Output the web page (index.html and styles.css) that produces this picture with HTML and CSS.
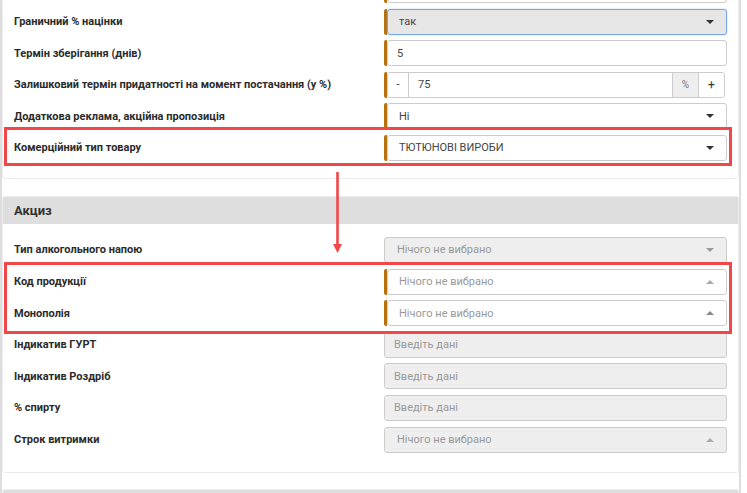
FILE: index.html
```html
<!DOCTYPE html>
<html lang="uk">
<head>
<meta charset="utf-8">
<title>Форма товару</title>
<link rel="stylesheet" href="styles.css">
</head>
<body>
<div class="page">
  <div class="frame">
    <section class="panel panel-main">
      <div class="form">
        <div class="lbl"></div>
        <div class="ctl req"><div class="box inp"></div></div>

        <div class="lbl">Граничний % націнки</div>
        <div class="ctl req"><div class="box sel focus"><span>так</span><i class="caret"></i></div></div>

        <div class="lbl">Термін зберігання (днів)</div>
        <div class="ctl req"><div class="box inp">5</div></div>

        <div class="lbl">Залишковий термін придатності на момент постачання (у %)</div>
        <div class="ctl req">
          <div class="group">
            <span class="gbtn minus">-</span>
            <span class="gval">75</span>
            <span class="addon">%</span>
            <span class="gbtn plus">+</span>
          </div>
        </div>

        <div class="lbl">Додаткова реклама, акційна пропозиція</div>
        <div class="ctl req"><div class="box sel"><span>Ні</span><i class="caret"></i></div></div>

        <div class="lbl">Комерційний тип товару</div>
        <div class="ctl req"><div class="box sel"><span>ТЮТЮНОВІ ВИРОБИ</span><i class="caret"></i></div></div>
      </div>
    </section>

    <section class="panel">
      <h2 class="heading">Акциз</h2>
      <div class="form form-excise">
        <div class="lbl">Тип алкогольного напою</div>
        <div class="ctl"><div class="box sel disabled"><span>Нічого не вибрано</span><i class="caret muted"></i></div></div>

        <div class="lbl">Код продукції</div>
        <div class="ctl req"><div class="box sel placeholder"><span>Нічого не вибрано</span><i class="caret up"></i></div></div>

        <div class="lbl">Монополія</div>
        <div class="ctl req"><div class="box sel placeholder"><span>Нічого не вибрано</span><i class="caret up dark"></i></div></div>

        <div class="lbl">Індикатив ГУРТ</div>
        <div class="ctl"><div class="box inp disabled">Введіть дані</div></div>

        <div class="lbl">Індикатив Роздріб</div>
        <div class="ctl"><div class="box inp disabled">Введіть дані</div></div>

        <div class="lbl">% спирту</div>
        <div class="ctl"><div class="box inp disabled">Введіть дані</div></div>

        <div class="lbl">Строк витримки</div>
        <div class="ctl"><div class="box sel disabled"><span>Нічого не вибрано</span><i class="caret up"></i></div></div>
      </div>
    </section>

    <section class="panel">
      <h2 class="heading">&nbsp;</h2>
    </section>
  </div>

  <div class="mark mark-commercial"></div>
  <svg class="arrow" width="9" height="81" viewBox="0 0 9 81" aria-hidden="true">
    <line x1="4.5" y1="0" x2="4.5" y2="73" stroke="#f24749" stroke-width="2.6"/>
    <polygon points="0,72 9,72 4.5,81" fill="#f24749"/>
  </svg>
  <div class="mark mark-excise"></div>
</div>
</body>
</html>
```
FILE: styles.css
```css
* { box-sizing: border-box; }

html, body {
  margin: 0;
  padding: 0;
  background: #fff;
}

body {
  font-family: Roboto, "Liberation Sans", Arial, sans-serif;
  color: #333;
  overflow: hidden;
}

.page {
  position: relative;
  width: 747px;
  height: 493px;
  overflow: hidden;
}

.frame {
  width: 741px;
  margin-top: -37px;
  border-left: 2px solid #dedede;
  border-right: 2px solid #dedede;
}

.panel {
  border: 1px solid #ececec;
  border-radius: 3px;
  margin-bottom: 16px;
  background: #fff;
}

.panel-main {
  margin-bottom: 17px;
}

.heading {
  margin: 0;
  height: 27px;
  display: flex;
  align-items: center;
  padding-left: 11px;
  background: #dedede;
  font-size: 13px;
  font-weight: 700;
  color: #333;
}

.form {
  display: grid;
  grid-template-columns: 370px 343px;
  row-gap: 5.6px;
  padding: 13px 11px 17px 11px;
  align-items: center;
}

.form-excise {
  padding-bottom: 19px;
}

.lbl {
  font-size: 11px;
  font-weight: 700;
  color: #2b2b2b;
  white-space: nowrap;
}

.ctl {
  display: flex;
  height: 26px;
}

.ctl.req {
  border-left: 3px solid #b7720e;
  border-radius: 2px 0 0 2px;
}

.box {
  flex: 1;
  height: 26px;
  display: flex;
  align-items: center;
  border: 1px solid #ccc;
  border-radius: 3px;
  background: #fff;
  font-size: 11px;
  color: #444;
}

.inp {
  padding: 0 9px;
}

.sel {
  justify-content: space-between;
  padding: 0 12px 0 11px;
}

.sel.focus {
  background: #e6e6e6;
  border-color: #7aa7e0;
  box-shadow: 0 0 2px rgba(102, 150, 233, 0.5);
}

.placeholder {
  color: #999;
}

.disabled {
  background: #eee;
  color: #999;
}

.ctl:not(.req) .sel {
  padding-left: 12px;
}

.caret {
  width: 0;
  height: 0;
  border-left: 4px solid transparent;
  border-right: 4px solid transparent;
  border-top: 4px solid #333;
}

.caret.muted {
  border-top-color: #999;
}

.caret.up {
  border-top: 0;
  border-bottom: 4px solid #aaa;
}

.caret.up.dark {
  border-bottom-color: #888;
}

.group {
  flex: 1;
  display: flex;
  height: 26px;
  margin-right: 2px;
  border: 1px solid #ccc;
  border-radius: 3px;
  font-size: 11px;
  color: #444;
  overflow: hidden;
}

.gbtn {
  display: flex;
  align-items: center;
  justify-content: center;
  background: #fff;
  color: #333;
}

.minus {
  width: 21px;
  border-right: 1px solid #ccc;
}

.plus {
  width: 25px;
  font-size: 12px;
}

.gval {
  flex: 1;
  display: flex;
  align-items: center;
  padding-left: 9px;
}

.addon {
  width: 27px;
  display: flex;
  align-items: center;
  justify-content: center;
  background: #eee;
  color: #777;
  font-size: 10px;
  border-left: 1px solid #ccc;
  border-right: 1px solid #ccc;
}

.mark {
  position: absolute;
  left: 4px;
  width: 728px;
  border: 3px solid #f24749;
}

.mark-commercial {
  top: 127px;
  height: 39px;
}

.mark-excise {
  top: 262px;
  height: 72px;
}

.arrow {
  position: absolute;
  left: 333px;
  top: 172px;
}
```
